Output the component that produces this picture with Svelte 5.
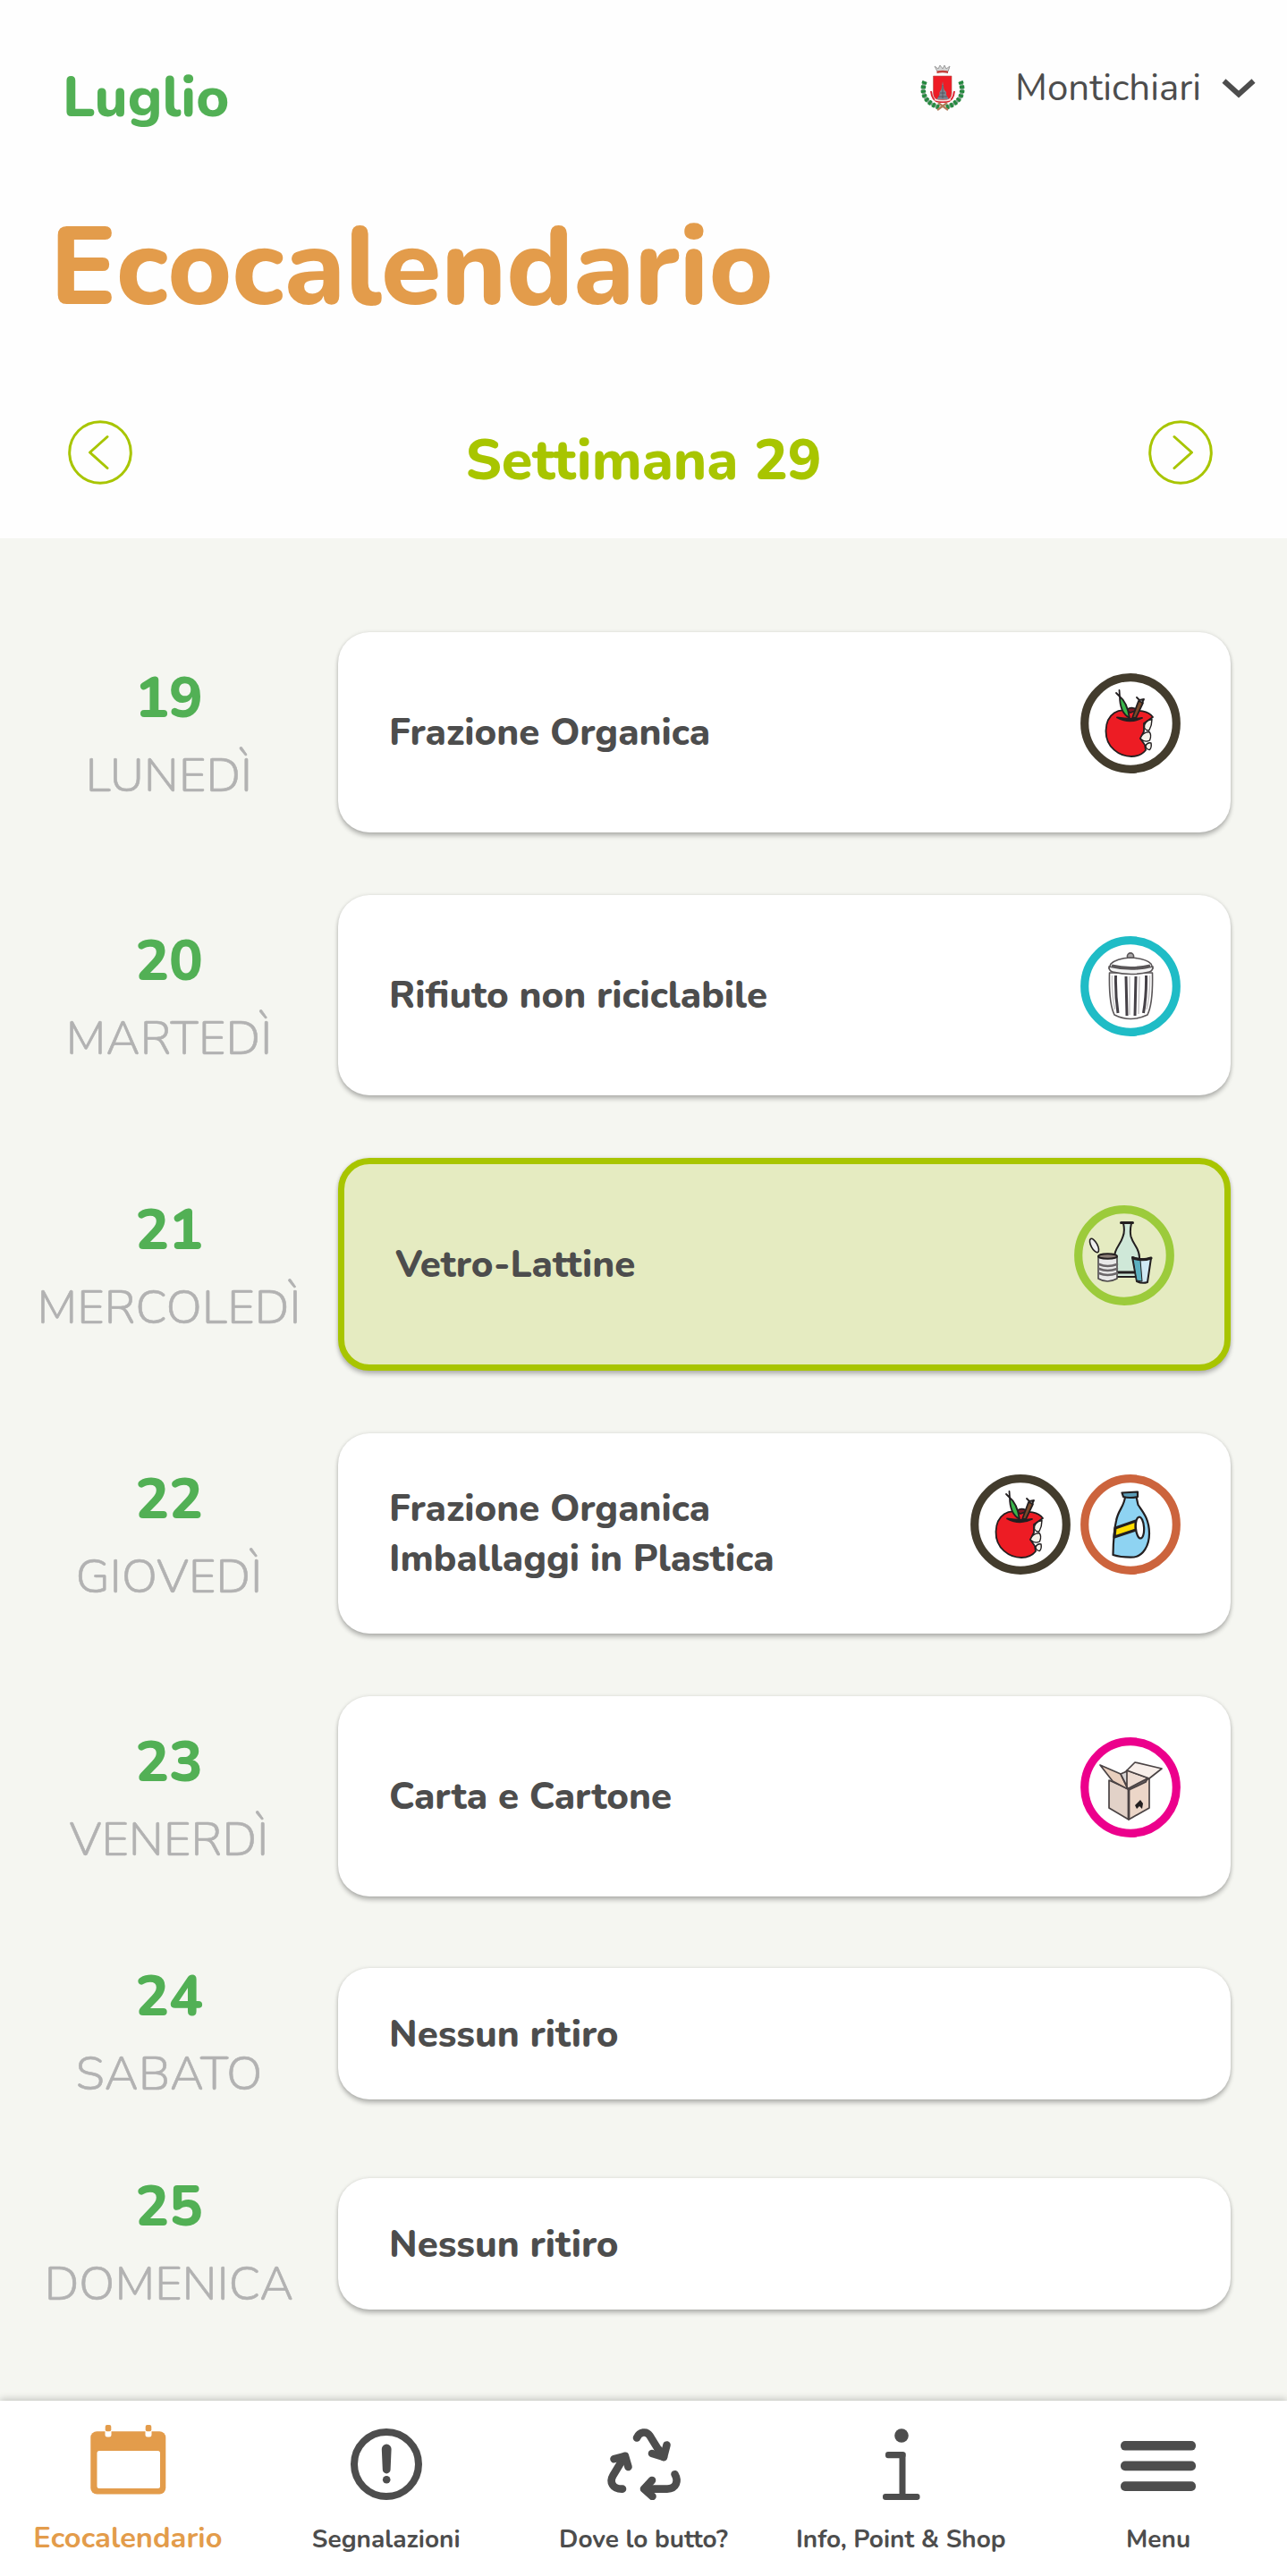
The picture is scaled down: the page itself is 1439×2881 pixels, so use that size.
<script>
  const month = 'Luglio';
  const town = 'Montichiari';
  const week = 29;

  const days = [
    { number: 19, name: 'Lunedì', pickups: [{ label: 'Frazione Organica', icon: 'organic' }] },
    { number: 20, name: 'Martedì', pickups: [{ label: 'Rifiuto non riciclabile', icon: 'residual' }] },
    { number: 21, name: 'Mercoledì', today: true, pickups: [{ label: 'Vetro-Lattine', icon: 'glass' }] },
    {
      number: 22,
      name: 'Giovedì',
      pickups: [
        { label: 'Frazione Organica', icon: 'organic' },
        { label: 'Imballaggi in Plastica', icon: 'plastic' }
      ]
    },
    { number: 23, name: 'Venerdì', pickups: [{ label: 'Carta e Cartone', icon: 'paper' }] },
    { number: 24, name: 'Sabato', pickups: [] },
    { number: 25, name: 'Domenica', pickups: [] }
  ];

  const ringColors = {
    organic: '#433c2d',
    residual: '#1fbcc6',
    glass: '#9ccb3b',
    plastic: '#cc643d',
    paper: '#ec008c'
  };

  const tabs = [
    { id: 'calendar', label: 'Ecocalendario' },
    { id: 'reports', label: 'Segnalazioni' },
    { id: 'sorting', label: 'Dove lo butto?' },
    { id: 'info', label: 'Info, Point & Shop' },
    { id: 'menu', label: 'Menu' }
  ];

  let activeTab = $state('calendar');
</script>

{#snippet wasteIcon(type)}
  <svg class="waste-icon" viewBox="0 0 112 112">
    <circle cx="56" cy="56" r="51.3" fill={type === 'glass' ? 'none' : '#fff'} stroke={ringColors[type]} stroke-width="9.2" />
    {#if type === 'organic'}
      <g stroke="#231f20" stroke-width="1.800" stroke-linejoin="round" stroke-linecap="round">
        <path d="M50 44c3-7 11-7 15-1l-7 8z" fill="#7d1a22" />
        <path d="M56 44C44 37 29 45 28.500 64C28 83 44 93 57 93C64 93 69 91 73 86L72 80L67 73L71 65L71 56L81 49C76 42 64 40 56 44Z" fill="#ed1c24" />
        <g stroke-width="1.400" fill="#f4f3ea">
          <path d="M71.500 61Q71 53 80 51.500Q80 58 77 63.500Q74 65 71.500 61Z" />
          <path d="M67 73Q69 66 77 65.500Q80 69 77.500 75Q72 78 67 73Z" />
          <path d="M73 81Q75 77 79 78Q80 83 77.500 85.500Q73.500 85.500 73 81Z" />
        </g>
        <path d="M41 49.500Q55 57 69 50Q56 52 41 49.500Z" fill="#231f20" />
        <path d="M58 50L65 31l5 2-8 17z" fill="#7a4a2a" />
        <path d="M63 27L66 30L71 29L69 33" fill="none" />
        <path d="M44 26q8 6 11 24q-11-6-11-24z" fill="#39b54a" />
        <path d="M40 22l4 4M43.500 19l.5 7" fill="none" />
      </g>
    {:else if type === 'residual'}
      <g stroke="#5a5658" stroke-width="1.600" fill="#fff" stroke-linecap="round" stroke-linejoin="round">
        <path d="M32.500 41C32 62 33 78 38 88Q56 97 75 88C80 78 81 62 80.500 41Z" />
        <circle cx="56" cy="22.500" r="3.600" fill="#a9a7a8" />
        <path d="M34 31Q40 25 56 24Q73 25 79 31L81 36Q57 46 32 36Z" />
        <path d="M32 34Q32 39 36 40Q57 45 77 40Q81 39 81 34Q57 40 32 34Z" fill="#f3f3f3" />
      </g>
      <path d="M35 33Q56 38 78 33" fill="none" stroke="#5a5658" stroke-width="3" />
      <path d="M39.500 44Q39 66 42 86M51 45L52 89M62 45L61 89M73.500 44Q74 66 70.500 86" fill="none" stroke="#454147" stroke-width="3" />
      <path d="M35.500 44Q35 66 38.500 82M55 45V88M66 45L65 87M77.500 44Q78 66 74 82" fill="none" stroke="#c9c7c8" stroke-width="1.500" />
    {:else if type === 'glass'}
      <g stroke="#231f20" stroke-width="2" stroke-linejoin="round" stroke-linecap="round">
        <path d="M55 20Q57 29 54.500 35C52 44 45 48 45 58V80H73V58C73 48 66 44 63.500 35Q62 29 64 20Z" fill="#cfe8d8" />
        <path d="M52.500 19.500H65.500" fill="none" stroke-width="3" />
        <path d="M46 75H70" fill="none" stroke-width="3" />
        <ellipse cx="22.500" cy="45" rx="3.500" ry="8.500" transform="rotate(-28 22.500 45)" fill="#eee" stroke-width="1.600" />
        <path d="M27 57V82Q37 88 48 82V57Z" fill="#e8e8e8" stroke="#4d494b" stroke-width="1.600" />
        <ellipse cx="37.500" cy="57" rx="10.500" ry="2.800" fill="#8c7f78" />
        <path d="M28 66Q37 70 48 66M28 71Q37 75 48 71M28 76Q37 80 48 76" fill="none" stroke="#6b676a" stroke-width="2.600" />
        <path d="M65 58L70 85Q76 88 82 86L86 59Q76 62 65 58Z" fill="#cfe9f5" />
        <path d="M66 60L70 84L76 85L74 61Z" fill="#5bb0c0" stroke-width="1" />
        <path d="M66 59Q76 62.500 86 59" fill="none" stroke-width="3" />
      </g>
    {:else if type === 'plastic'}
      <g stroke="#231f20" stroke-width="2.200" stroke-linejoin="round">
        <path d="M50 25C49 36 42 40 40 52Q37 64 36.500 90Q46 93 60 92.500C70 91 77 80 77 66C77 50 70 42 64.500 34L62.500 25Z" fill="#8ed3f2" />
        <path d="M46.500 20.500L64 19.500V25Q55 27 48 25Z" fill="#5b9db8" />
        <path d="M39 60L62 52V62L38 70Z" fill="#ffdd00" stroke-width="3" />
        <ellipse cx="66.500" cy="59.500" rx="4.600" ry="12" transform="rotate(-4 66.500 59.500)" fill="#fff" />
      </g>
    {:else}
      <g stroke="#4a4344" stroke-width="1.700" stroke-linejoin="round">
        <path d="M52 37L77 46L54 58L44 46Z" fill="#eddcd2" />
        <path d="M32 48L54 58V92L32 79Z" fill="#e2d2c8" />
        <path d="M54 58L77 46V79L54 92Z" fill="#ecd6c8" />
        <path d="M22 31L45 41L53 58L36 49Z" fill="#e9cfbd" />
        <path d="M61 28L91 35L77 46L52 37Z" fill="#f8efea" />
        <path d="M45 41L52 38L52 55Z" fill="#d8d5d5" />
        <path d="M54 59L73 50L75 46L54 57Z" fill="#6d6668" />
        <path d="M54 58V92" stroke-width="2.800" />
      </g>
      <path d="M61 76L67 70L70 74L69 80L66 77L63 80Z" fill="#231f20" />
    {/if}
  </svg>
{/snippet}

<div class="page">
  <header>
    <div class="top">
      <h2 class="month">{month}</h2>
      <button type="button" class="town">
        <svg class="crest" viewBox="0 0 52 56">
          <path d="M17 3L20 9H32L34 3L30 6L28 2L26 6L23 2L21 6Z" fill="#d5d5d5" stroke="#9c9c9c" stroke-width="1" />
          <path d="M19.500 8.500Q26 7 32 8.500V11Q26 9.500 19.500 11Z" fill="#c4423c" />
          <path d="M6 20C1 34 7 44 22 49M46 20C51 34 45 44 30 49" fill="none" stroke="#7da58a" stroke-width="4" />
          <path d="M6 20C1 34 7 44 22 49M46 20C51 34 45 44 30 49" fill="none" stroke="#25893f" stroke-width="5.500" stroke-dasharray="3 2" />
          <path d="M15.500 14H36V33Q36 39 31 40.500H20.500Q15.500 39 15.500 33Z" fill="#ee1c25" stroke="#b5544f" stroke-width=".6" />
          <path d="M13 31Q14 42 22 43H30Q38 42 39 31" fill="none" stroke="#dc2430" stroke-width="2" />
          <path d="M26 20L27.500 29L30 32V35L33 40H19.500L22.500 35V32L24.500 29Z" fill="#7e8590" />
          <path d="M26 24V39M23 33L29 33M21 37H31" stroke="#4b4f58" stroke-width=".8" />
          <path d="M17 40.500Q26 43 35 40.500" fill="none" stroke="#f1dede" stroke-width="1.300" />
          <path d="M20 52L31 44M32 52L21 44" stroke="#b07e5c" stroke-width="2.200" />
        </svg>
        <span>{town}</span>
        <svg class="chevron" viewBox="0 0 38 24">
          <path d="M2.500 3.500L19 18.500L35.500 3.500" fill="none" stroke="currentColor" stroke-width="6" />
        </svg>
      </button>
    </div>

    <h1>Ecocalendario</h1>

    <div class="week">
      <button type="button" class="arrow" aria-label="Settimana precedente">
        <svg viewBox="0 0 72 72">
          <circle cx="36" cy="36" r="34.300" />
          <path d="M44 18.500L24.500 36L44 53.500" />
        </svg>
      </button>
      <h2>Settimana {week}</h2>
      <button type="button" class="arrow" aria-label="Settimana successiva">
        <svg viewBox="0 0 72 72">
          <circle cx="36" cy="36" r="34.300" />
          <path d="M29 18.500L48.500 36L29 53.500" />
        </svg>
      </button>
    </div>
  </header>

  <main>
    {#each days as day}
      <section class="day" class:empty={day.pickups.length === 0}>
        <div class="date">
          <div class="number">{day.number}</div>
          <div class="name">{day.name}</div>
        </div>
        <div class="card" class:today={day.today}>
          <div class="labels">
            {#each day.pickups as pickup}
              <div>{pickup.label}</div>
            {:else}
              <div>Nessun ritiro</div>
            {/each}
          </div>
          {#if day.pickups.length > 0}
            <div class="icons">
              {#each day.pickups as pickup}
                {@render wasteIcon(pickup.icon)}
              {/each}
            </div>
          {/if}
        </div>
      </section>
    {/each}
  </main>

  <nav>
    {#each tabs as tab}
      <button type="button" class="tab" class:active={activeTab === tab.id} onclick={() => (activeTab = tab.id)}>
        <svg viewBox="0 0 100 84" fill="currentColor">
          {#if tab.id === 'calendar'}
            <rect x="7.300" y="7.200" width="84" height="70.400" rx="7" />
            <rect x="14.500" y="29" width="70.500" height="42" rx="2.500" fill="#fff" />
            <path d="M23.500 6H30.500V11Q30.500 13.500 28 13.500H26Q23.500 13.500 23.500 11ZM68.500 6H75.500V11Q75.500 13.500 73 13.500H71Q68.500 13.500 68.500 11Z" fill="#fff" />
            <rect x="23.700" y="0" width="6.600" height="7.200" rx="2" />
            <rect x="68.700" y="0" width="6.600" height="7.200" rx="2" />
          {:else if tab.id === 'reports'}
            <circle cx="50" cy="44" r="36" fill="none" stroke="currentColor" stroke-width="8" />
            <path d="M44.800 27a5.400 5.400 0 0 1 10.800 0L54.600 50a4.400 4.400 0 0 1-8.800 0Z" />
            <circle cx="50.200" cy="61.300" r="4.300" />
          {:else if tab.id === 'sorting'}
            <g fill="none" stroke="currentColor" stroke-width="8.600" stroke-linecap="round" stroke-linejoin="round">
              <path d="M43 14.500C46 7.500 54 6.500 57.500 12L71 34" />
              <path d="M76.500 22.500L73 36L60 32" />
              <path d="M73 36L68 28" />
              <path d="M27 71.600C16 72 12 64 16.500 56.500L29.500 35" />
              <path d="M17.500 38.200L30 35L33.500 47" />
              <path d="M85.500 55.200C90 63 87 71.600 77 71.600H52" />
              <path d="M60 62L51 71.600L60.500 80" />
            </g>
          {:else if tab.id === 'info'}
            <circle cx="51" cy="12" r="7.800" />
            <rect x="33" y="30" width="22.500" height="7.200" rx="3" />
            <rect x="48.500" y="31.500" width="7" height="50" />
            <rect x="30" y="77" width="41.500" height="7" rx="3" />
          {:else}
            <rect x="8" y="18" width="84" height="10.600" rx="5" />
            <rect x="8" y="40.600" width="84" height="10.600" rx="5" />
            <rect x="8" y="63.300" width="84" height="10.600" rx="5" />
          {/if}
        </svg>
        <span>{tab.label}</span>
      </button>
    {/each}
  </nav>
</div>

<style>
  :global(body) {
    margin: 0;
    background: #fff;
  }

  .page {
    display: flex;
    flex-direction: column;
    width: 1439px;
    height: 2881px;
    overflow: hidden;
    font-family: Nunito, Lato, sans-serif;
    color: #4d4d4d;
  }

  h1,
  h2 {
    margin: 0;
    font-weight: 800;
  }

  button {
    padding: 0;
    border: 0;
    background: none;
    font: inherit;
    color: inherit;
    cursor: pointer;
  }

  svg {
    display: block;
    flex-shrink: 0;
  }

  header {
    box-sizing: border-box;
    height: 602px;
    padding-top: 66px;
    background: #fefefe;
  }

  .top {
    display: flex;
    justify-content: space-between;
    align-items: flex-start;
    height: 86px;
    padding: 0 35px 0 70px;
  }

  .month {
    font-size: 63px;
    line-height: 86px;
    color: #52b055;
  }

  .town {
    display: flex;
    align-items: center;
    height: 65px;
    font-size: 42px;
    line-height: 65px;
  }

  .crest {
    width: 52px;
    height: 56px;
    margin-right: 55px;
  }

  .chevron {
    width: 38px;
    height: 24px;
    margin-left: 23px;
  }

  h1 {
    margin: 64px 0 86px;
    padding-left: 56px;
    font-size: 122.5px;
    line-height: 168px;
    color: #e39c4b;
  }

  .week {
    display: flex;
    justify-content: space-between;
    align-items: flex-start;
    padding: 0 83px 0 76px;
    color: #a8c500;
  }

  .week h2 {
    padding: 2px 0 0 7px;
    font-size: 63px;
    line-height: 86px;
  }

  .arrow svg {
    width: 72px;
    height: 72px;
    fill: none;
    stroke: currentColor;
    stroke-width: 3;
    stroke-linecap: round;
    stroke-linejoin: round;
  }

  main {
    flex: 1;
    display: flex;
    flex-direction: column;
    gap: 70px;
    padding: 105px 63.5px 0 0;
    background: #f5f6f1;
  }

  .day {
    display: grid;
    grid-template-columns: 378px 1fr;
    align-items: center;
  }

  .date {
    padding-top: 5px;
    text-align: center;
  }

  .number {
    margin-bottom: 8px;
    font-size: 63px;
    font-weight: 800;
    line-height: 85px;
    color: #52b055;
  }

  .name {
    font-size: 52.5px;
    font-weight: 300;
    line-height: 72px;
    letter-spacing: 0.25px;
    text-transform: uppercase;
    color: #b2b2b2;
    -webkit-text-stroke: 0.6px #b2b2b2;
  }

  .card {
    display: flex;
    justify-content: space-between;
    align-items: center;
    height: 224px;
    padding: 0 56px 0 57px;
    border-radius: 35px;
    background: #fff;
    box-shadow: 0 4px 5px rgba(0, 0, 0, 0.24), 0 0 4px rgba(0, 0, 0, 0.12);
  }

  .card.today {
    border: 7px solid #a8c500;
    background: #e5ebc1;
  }

  .labels {
    padding-top: 2px;
    font-size: 42px;
    font-weight: 800;
    line-height: 56px;
  }

  .icons {
    display: flex;
    gap: 10.5px;
    margin-bottom: 21px;
  }

  .waste-icon {
    width: 112px;
    height: 112px;
  }

  .empty .date {
    padding-top: 0;
  }

  .empty .card {
    height: 147px;
    margin-top: 2px;
  }

  nav {
    position: relative;
    display: grid;
    grid-template-columns: repeat(5, 1fr);
    box-sizing: border-box;
    height: 196px;
    padding-top: 27px;
    background: #fff;
    box-shadow: 0 -2px 8px rgba(0, 0, 0, 0.2);
  }

  .tab {
    display: flex;
    flex-direction: column;
    align-items: center;
    font-size: 28px;
    font-weight: 700;
    line-height: 44px;
    white-space: nowrap;
  }

  .tab svg {
    width: 100px;
    height: 84px;
    margin-bottom: 22px;
  }

  .tab.active {
    font-size: 32.7px;
    line-height: 42px;
    color: #e39c4b;
  }

  .tab.active span {
    margin-right: 2px;
  }
</style>
